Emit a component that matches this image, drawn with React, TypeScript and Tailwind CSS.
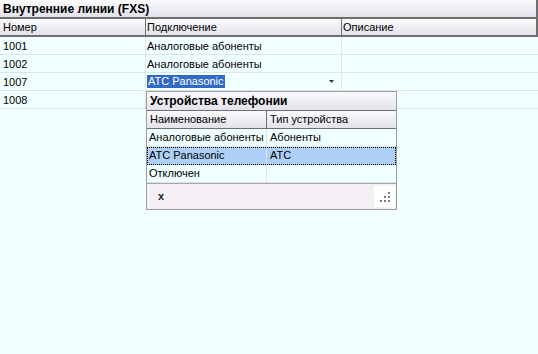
import React from "react";

const rows = [
  { num: "1001", conn: "Аналоговые абоненты" },
  { num: "1002", conn: "Аналоговые абоненты" },
  { num: "1007", conn: "АТС Panasonic", editing: true },
  { num: "1008", conn: "" },
];

const devices = [
  { name: "Аналоговые абоненты", type: "Абоненты" },
  { name: "АТС Panasonic", type: "АТС", selected: true },
  { name: "Отключен", type: "" },
];

function Grip() {
  // resize grip: 1 / 2 / 3 dots stacked to bottom-right
  const dots = [
    [2, 0],
    [1, 1],
    [2, 1],
    [0, 2],
    [1, 2],
    [2, 2],
  ];
  return (
    <div className="w-[21px] h-[21px] bg-white relative">
      {dots.map(([c, r]) => (
        <span
          key={`${c}-${r}`}
          className="absolute w-[2px] h-[2px] bg-[#7b7b7b]"
          style={{ left: 6 + c * 4, top: 6 + r * 4 }}
        />
      ))}
    </div>
  );
}

function DevicePopup() {
  return (
    <div className="absolute left-[146px] top-[91px] w-[251px] h-[119px] border border-[#9c9c9c] bg-[#f0ffff] flex flex-col">
      {/* Popup title */}
      <div className="h-[19px] shrink-0 border-b border-[#707070] bg-gradient-to-b from-[#fbfbfd] to-[#e2e2ea] px-[3px] font-bold text-[12px] leading-[19px] text-black whitespace-nowrap">
        Устройства телефонии
      </div>

      {/* Header */}
      <div className="h-[18px] shrink-0 flex border-b border-[#707070] bg-gradient-to-b from-[#fbfbfd] to-[#e2e2ea] text-[11px] leading-[17px] whitespace-nowrap">
        <div className="w-[120px] shrink-0 border-r border-[#707070] pl-[3px]">Наименование</div>
        <div className="flex-1 pl-[3px]">Тип устройства</div>
      </div>

      {devices.map((d) => (
        <div
          key={d.name}
          className={`h-[18px] shrink-0 flex text-[11px] leading-[17px] whitespace-nowrap ${
            d.selected
              ? "bg-[#aecff6] outline outline-1 outline-dotted outline-black -outline-offset-1"
              : "border-b border-[#dde4e2]"
          }`}
        >
          <div className="w-[120px] shrink-0 overflow-hidden border-r border-[#dde4e2] pl-[2px]">{d.name}</div>
          <div className="flex-1 pl-[3px]">{d.type}</div>
        </div>
      ))}

      {/* Footer */}
      <div className="flex-1 border-t border-[#a8a8a8] bg-[#f5f0f5] flex items-center justify-between pl-[11px] pr-[1px]">
        <span className="font-bold text-[11px] leading-none text-[#222]">x</span>
        <Grip />
      </div>
    </div>
  );
}

export default function App() {
  return (
    <div
      className="relative w-[538px] h-[354px] bg-[#f0ffff] overflow-hidden text-black"
      style={{ fontFamily: '"Liberation Sans", Arial, sans-serif' }}
    >
      {/* Title bar */}
      <div className="h-[19px] border-b-2 border-r-2 border-[#6f6f6f] bg-gradient-to-b from-[#fbfbfd] to-[#e2e2ea] px-[3px] font-bold text-[12px] leading-[18px] whitespace-nowrap">
        Внутренние линии (FXS)
      </div>

      {/* Column headers */}
      <div className="h-[18px] flex border-b-2 border-r-2 border-[#6f6f6f] bg-gradient-to-b from-[#fbfbfd] to-[#e2e2ea] text-[11px] leading-[17px] whitespace-nowrap">
        <div className="w-[146px] shrink-0 border-r border-[#6f6f6f] pl-[3px]">Номер</div>
        <div className="w-[196px] shrink-0 border-r border-[#6f6f6f] pl-[1px]">Подключение</div>
        <div className="flex-1 pl-[1px]">Описание</div>
      </div>

      {/* Rows */}
      {rows.map((r) => (
        <div key={r.num} className="h-[18px] flex border-b border-[#dde6e3] text-[11px] leading-[18px] whitespace-nowrap">
          <div className="w-[146px] shrink-0 border-r border-[#dde6e3] pl-[3px]">{r.num}</div>
          <div className="w-[196px] shrink-0 border-r border-[#dde6e3] pl-[1px] flex items-center">
            {r.editing ? (
              <>
                <span className="bg-[#316ac5] text-white leading-[13px] px-[1px]">{r.conn}</span>
                <svg className="ml-auto mr-[7px]" width="5" height="3" viewBox="0 0 5 3">
                  <path d="M0 0h5L2.5 3z" fill="#333" />
                </svg>
              </>
            ) : (
              <span className="leading-[18px]">{r.conn}</span>
            )}
          </div>
          <div className="flex-1" />
        </div>
      ))}

      <DevicePopup />
    </div>
  );
}
